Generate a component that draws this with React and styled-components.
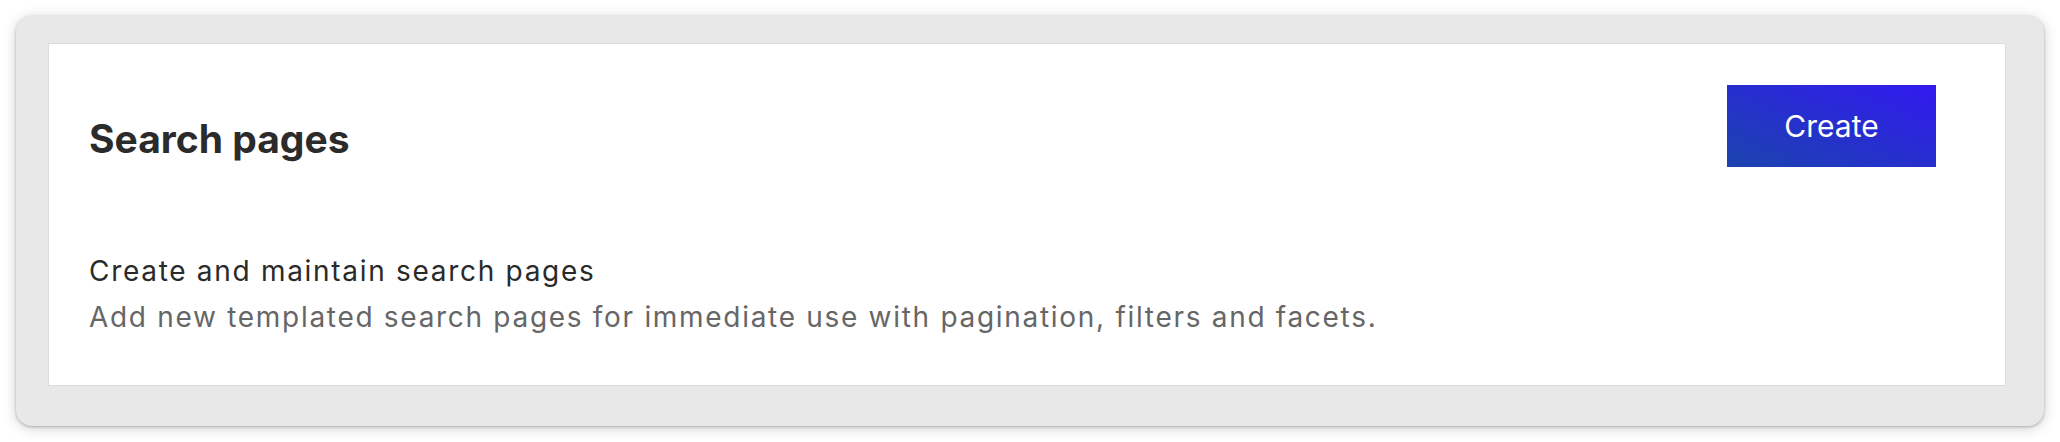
import styled, { createGlobalStyle } from 'styled-components'

const GlobalStyle = createGlobalStyle`
  body {
    margin: 0;
    background: #ffffff;
    font-family: Inter, "Noto Sans", sans-serif;
  }
`

const Page = styled.div`
  padding: 16px;
`

const Frame = styled.div`
  background: #e8e8e8;
  border-radius: 16px;
  padding: 27px 38px 40px 32px;
  box-shadow: 0 1px 3px rgba(0, 0, 0, 0.25), 0 2px 14px rgba(0, 0, 0, 0.18);
`

const Card = styled.section`
  background: #ffffff;
  border: 1px solid #dcdcdc;
  padding: 41px 69px 45px 40px;
`

const Header = styled.div`
  display: flex;
  justify-content: space-between;
  align-items: flex-start;
`

const Title = styled.h1`
  margin: 32px 0 0;
  font-size: 39px;
  line-height: 44px;
  font-weight: 700;
  color: #2b2b2b;
`

const Button = styled.button`
  display: flex;
  align-items: center;
  justify-content: center;
  min-width: 209px;
  height: 82px;
  padding: 0 56px;
  border: none;
  border-radius: 0;
  background: linear-gradient(to top right, #1b44ad, #3219f0);
  color: #ffffff;
  font-family: inherit;
  font-size: 30px;
  font-weight: 400;
  cursor: pointer;
`

const Description = styled.div`
  margin-top: 81px;
  font-size: 28px;
  line-height: 46px;
  letter-spacing: 1.7px;
`

const Lead = styled.p`
  margin: 0;
  color: #2a2a2a;
`

const Hint = styled.p`
  margin: 0;
  color: #666666;
`

const App = () => {
  return (
    <>
      <GlobalStyle />
      <Page>
        <Frame>
          <Card>
            <Header>
              <Title>Search pages</Title>
              <Button>Create</Button>
            </Header>
            <Description>
              <Lead>Create and maintain search pages</Lead>
              <Hint>
                Add new templated search pages for immediate use with
                pagination, filters and facets.
              </Hint>
            </Description>
          </Card>
        </Frame>
      </Page>
    </>
  )
}

export default App
